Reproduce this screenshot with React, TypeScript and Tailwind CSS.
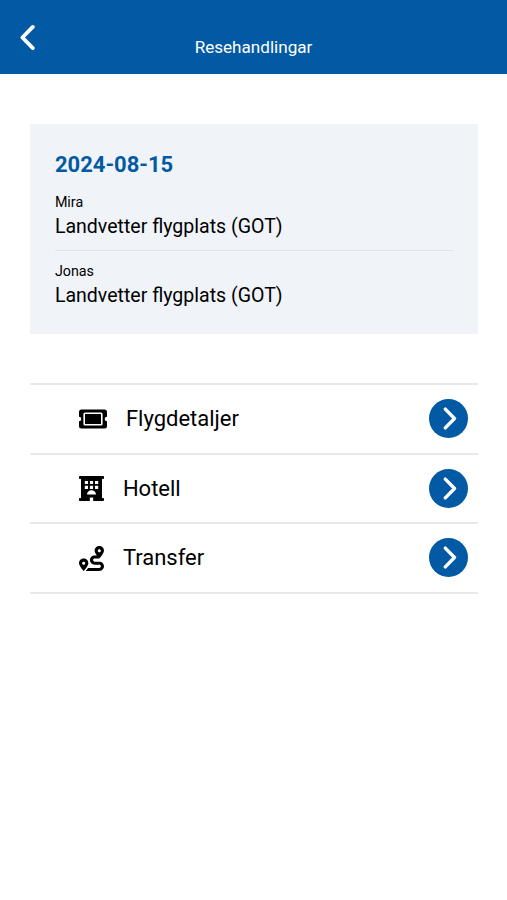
import { FaRoute } from 'react-icons/fa'
import type { ReactNode } from 'react'

function Chevron({ className }: { className: string }) {
  return (
    <svg viewBox="0 0 15 26" fill="none" stroke="currentColor" strokeWidth="3.8" className={className}>
      <path d="M2.2 2.4L12.6 13 2.2 23.6" strokeLinecap="round" strokeLinejoin="round" />
    </svg>
  )
}

function TicketIcon() {
  return (
    <svg viewBox="0 0 28 20" className="h-5 w-7">
      <path
        fill="currentColor"
        d="M2.5.5h23A2.5 2.5 0 0 1 28 3v4.7a2.3 2.3 0 0 0 0 4.6V17a2.5 2.5 0 0 1-2.5 2.5h-23A2.5 2.5 0 0 1 0 17v-4.7a2.3 2.3 0 0 0 0-4.6V3A2.5 2.5 0 0 1 2.5.5z"
      />
      <rect x="5.2" y="4.3" width="17.6" height="11.4" rx="0.8" fill="none" stroke="white" strokeWidth="1.6" />
    </svg>
  )
}

function HotelIcon() {
  return (
    <svg viewBox="0 0 25 25" className="h-[25px] w-[25px]">
      <path
        fill="currentColor"
        d="M.8 0h23.4a.8.8 0 0 1 .8.8v1.4a.8.8 0 0 1-.8.8H23v19h1.2a.8.8 0 0 1 .8.8v1.4a.8.8 0 0 1-.8.8H14.2v-3.6h-3.4V25H.8a.8.8 0 0 1-.8-.8v-1.4A.8.8 0 0 1 .8 22H2V3H.8a.8.8 0 0 1-.8-.8V.8A.8.8 0 0 1 .8 0z"
      />
      <path
        fill="white"
        d="M5.8 5H9v3.1H5.8zM10.9 5h3.2v3.1h-3.2zM16 5h3.2v3.1H16zM5.8 9.8H9v3.1H5.8zM10.9 9.8h3.2v3.1h-3.2zM16 9.8h3.2v3.1H16zM8 18.6c0-2.6 2-4.4 4.5-4.4s4.5 1.8 4.5 4.4z"
      />
    </svg>
  )
}

const travelers = [
  { name: 'Mira', airport: 'Landvetter flygplats (GOT)' },
  { name: 'Jonas', airport: 'Landvetter flygplats (GOT)' },
]

const actions: { label: string; icon: ReactNode }[] = [
  { label: 'Flygdetaljer', icon: <TicketIcon /> },
  { label: 'Hotell', icon: <HotelIcon /> },
  {
    label: 'Transfer',
    icon: <FaRoute className="mt-px h-[25px] w-[25px]" />,
  },
]

export default function App() {
  return (
    <div className="min-h-[900px] bg-white font-['Roboto',sans-serif] text-black">
      <header className="grid h-[74px] grid-cols-[1fr_auto_1fr] bg-[#035aa4] text-white">
        <button aria-label="Tillbaka" className="ml-[19.5px] mt-[24px] h-[27px] w-[15px]">
          <Chevron className="h-[27px] w-[15px] rotate-180" />
        </button>
        <h1 className="mt-[37px] text-[17.1px] leading-5">Resehandlingar</h1>
      </header>

      <main className="pl-[30.4px] pr-[29px] pt-[50px]">
        <section className="h-[210px] bg-[#f0f4f8] pl-[24.5px] pr-[25px] pt-[27px]">
          <h2 className="text-[22px] font-bold leading-7 text-[#035aa4]">2024-08-15</h2>
          <div className="divide-y divide-[#dfe4e9]">
            {travelers.map((traveler) => (
              <div key={traveler.name} className="pb-[9px] pt-[9.5px] first:pt-[13px]">
                <p className="text-[14.3px] leading-5">{traveler.name}</p>
                <p className="text-[19.55px] leading-[29px]">{traveler.airport}</p>
              </div>
            ))}
          </div>
        </section>

        <ul className="mt-[49px] border-t-2 border-[#e8e8e8]">
          {actions.map(({ label, icon }) => (
            <li
              key={label}
              className="flex h-[69.6px] items-center border-b-2 border-[#e8e8e8] pl-[48.5px] pr-[10px]"
            >
              <div className="flex items-center gap-[19px]">
                {icon}
                <span className="pt-px text-[22px] leading-7">{label}</span>
              </div>
              <button
                aria-label={label}
                className="ml-auto flex size-[39px] items-center justify-center rounded-full bg-[#035aa4] text-white"
              >
                <Chevron className="ml-[3px] h-[23px] w-[14px]" />
              </button>
            </li>
          ))}
        </ul>
      </main>
    </div>
  )
}
